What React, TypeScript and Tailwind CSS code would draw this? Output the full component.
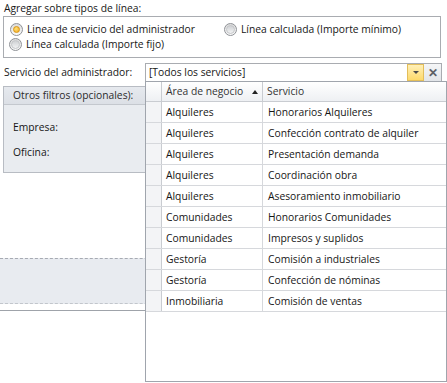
import React from "react";

const rows = [
  ["Alquileres", "Honorarios Alquileres"],
  ["Alquileres", "Confección contrato de alquiler"],
  ["Alquileres", "Presentación demanda"],
  ["Alquileres", "Coordinación obra"],
  ["Alquileres", "Asesoramiento inmobiliario"],
  ["Comunidades", "Honorarios Comunidades"],
  ["Comunidades", "Impresos y suplidos"],
  ["Gestoría", "Comisión a industriales"],
  ["Gestoría", "Confección de nóminas"],
  ["Inmobiliaria", "Comisión de ventas"],
];

const Radio = ({ checked }: { checked?: boolean }) => (
  <div className="w-[13px] h-[13px] rounded-full border border-[#8f9297] bg-[linear-gradient(#dcdcdc,#fafafa)] flex items-center justify-center shrink-0">
    {checked ? (
      <div className="w-[7px] h-[7px] rounded-full bg-[radial-gradient(circle_at_40%_35%,#fde27a,#f3a81c)] border border-[#d99514]" />
    ) : (
      <div className="w-[9px] h-[9px] rounded-full bg-[linear-gradient(#cfd1d4,#f2f3f4)] border border-[#c4c6c9]" />
    )}
  </div>
);

export default function App() {
  return (
    <div className="w-[447px] h-[383px] bg-white relative overflow-hidden text-[10.3px] leading-[13px] text-[#161616] font-['Open_Sans',Arial,sans-serif]">
      <div className="h-[16px] pl-[4px] pt-[2px]">Agregar sobre tipos de línea:</div>

      <div className="ml-[3px] w-[438px] h-[42px] border border-[#a9acb1] pt-[5px]">
        <div className="flex h-[15px] items-center">
          <div className="flex items-center gap-[4px] pl-[6px] w-[220px]">
            <Radio checked />
            <span>Linea de servicio del administrador</span>
          </div>
          <div className="flex items-center gap-[4px]">
            <Radio />
            <span>Línea calculada (Importe mínimo)</span>
          </div>
        </div>
        <div className="flex h-[15px] items-center">
          <div className="flex items-center gap-[4px] pl-[5px]">
            <Radio />
            <span>Línea calculada (Importe fijo)</span>
          </div>
        </div>
      </div>

      <div className="flex items-center h-[20px] mt-[4px]">
        <div className="w-[145px] pl-[4px]">Servicio del administrador:</div>
        <div className="w-[297px] h-[19px] border border-[#a9acb1] flex items-center">
          <span className="flex-1 pl-[3px]">[Todos los servicios]</span>
          <div className="w-[17px] h-[17px] border border-[#e3be5a] bg-[linear-gradient(#fff0b8,#fdd96b)] flex items-center justify-center">
            <div className="w-0 h-0 border-l-[3px] border-r-[3px] border-t-[3px] border-l-transparent border-r-transparent border-t-[#4a4a4a]" />
          </div>
          <div className="w-[17px] h-[17px] bg-[linear-gradient(#f5f6f7,#e2e5e9)] flex items-center justify-center text-[#5c6066] font-bold text-[12px]">
            ✕
          </div>
        </div>
      </div>

      <div className="relative pt-[4px]">
        <div className="ml-[3px] w-[160px] border border-[#b8bcc3] bg-[#e9ecf0]">
          <div className="h-[18px] flex items-center pl-[9px] bg-[linear-gradient(#e6e9ee,#dce0e6)] border-b border-[#c4c8ce] text-[#2b2b2b]">
            Otros filtros (opcionales):
          </div>
          <div className="h-[67px] pl-[9px] pt-[16px] flex flex-col gap-[12px]">
            <div>Empresa:</div>
            <div>Oficina:</div>
          </div>
        </div>

        <div className="h-[85px]" />
        <div className="h-[46px] border-t border-dashed border-[#a6aab2] bg-[#e8ebf0] border-b border-b-[#c2c6cc]" />
        <div className="h-[7px] border-b border-[#9fa3aa]" />

        <div className="absolute left-[145px] top-[-1px] w-[302px] h-[301px] border border-[#a0a5ad] bg-white">
          <div className="flex h-[20px] border-b border-[#c9ccd1] bg-[linear-gradient(#ffffff,#eef0f3)] text-[#333]">
            <div className="w-[16px] border-r border-[#c9ccd1]" />
            <div className="w-[101px] border-r border-[#c9ccd1] flex items-center pl-[4px] gap-[9px]">
              <span>Área de negocio</span>
              <div className="w-0 h-0 border-l-[3px] border-r-[3px] border-b-[4px] border-l-transparent border-r-transparent border-b-[#222]" />
            </div>
            <div className="flex-1 flex items-center pl-[4px]">Servicio</div>
          </div>
          {rows.map(([area, servicio], i) => (
            <div key={i} className="flex h-[21px] border-b border-[#d6d8dc]">
              <div className="w-[16px] border-r border-[#c9ccd1] bg-[#f3f4f6]" />
              <div className="w-[101px] border-r border-[#d6d8dc] flex items-center pl-[4px]">{area}</div>
              <div className="flex-1 flex items-center pl-[5px]">{servicio}</div>
            </div>
          ))}
        </div>
      </div>
    </div>
  );
}
